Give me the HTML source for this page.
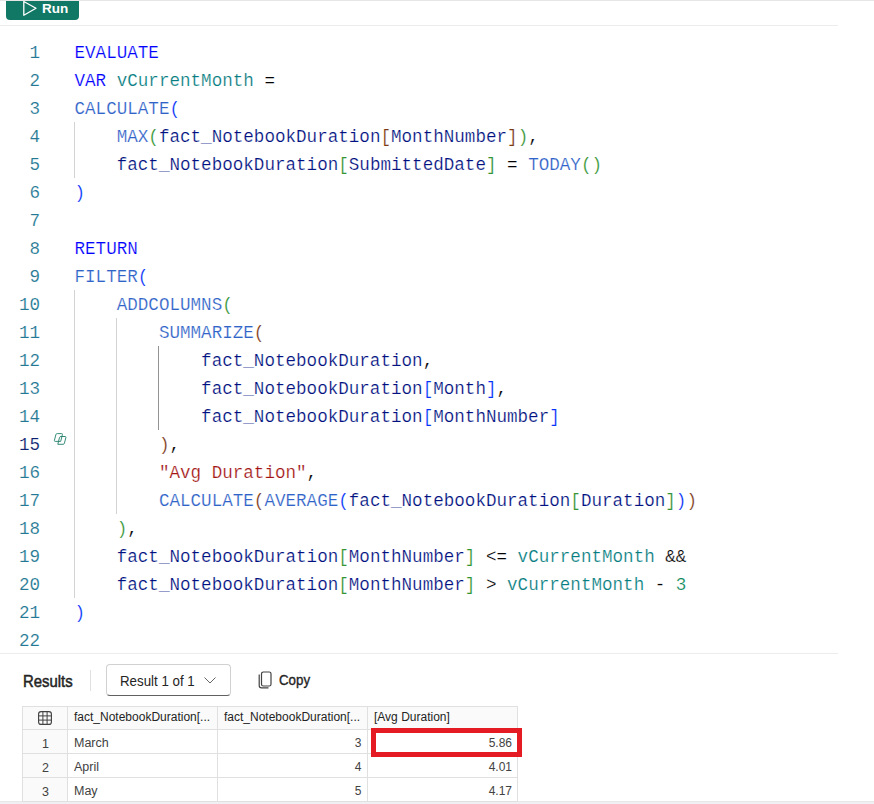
<!DOCTYPE html>
<html><head><meta charset="utf-8">
<style>
*{margin:0;padding:0;box-sizing:border-box}
html,body{width:874px;height:804px;overflow:hidden;background:#fff;position:relative}
body{font-family:"Liberation Sans",sans-serif}
.abs{position:absolute}
.hl{position:absolute;height:1px}
#run{position:absolute;left:6px;top:1px;width:73px;height:19px;background:#117865;border-radius:0 0 4px 4px}
#run .lbl{position:absolute;left:36px;top:0px;color:#fff;font-weight:bold;font-size:13.5px;line-height:16px}
.ln{position:absolute;left:0;width:40px;text-align:right;font-family:"Liberation Mono",monospace;font-size:17.58px;line-height:28px;height:28px;color:#237893;white-space:pre;-webkit-text-stroke:0.15px #fff}
.cl{position:absolute;left:74.5px;font-family:"Liberation Mono",monospace;font-size:17.58px;line-height:28px;height:28px;color:#000;white-space:pre;-webkit-text-stroke:0.2px #fff}
.ig{position:absolute;width:1px;background:#d3d3d3}
.k{color:#0000ff}.f{color:#2f63c8}.v{color:#067d80}.t{color:#001080}.s{color:#a31515}.n{color:#098658}
.b1{color:#0431fa}.b2{color:#319331}.b3{color:#7b3814}
</style></head><body>
<div class="hl" style="left:0;top:0;width:874px;background:#e6e6e6"></div>
<div id="run"><svg class="abs" style="left:16px;top:-1px" width="16" height="17" viewBox="0 0 16 17"><path d="M1.8 1.5 L14 8.3 L1.8 15.2 Z" fill="none" stroke="#fff" stroke-width="1.3" stroke-linejoin="round"/></svg><div class="lbl">Run</div></div>
<div class="hl" style="left:0;top:25px;width:838px;background:#ececec"></div>

<div id="code">
<svg class="abs" style="left:48px;top:428px" width="24" height="24" viewBox="48 428 24 24"><path d="M57.3 433.6 H61.6 Q62.6 433.6 62.4 434.6 L60.7 441.4 H55.2 Q54.2 441.4 54.4 440.4 L55.9 434.6 Q56.1 433.6 57.3 433.6 Z M61 436.5 H65.1 Q66.1 436.5 65.9 437.5 L64.4 443.3 Q64.2 444.3 63.2 444.3 H57.8 L59.5 437.5 Q59.7 436.5 61 436.5 Z" fill="none" stroke="#2a8571" stroke-width="0.95" stroke-linejoin="round"/></svg>
<div class="ln" style="top:39.3px">1</div>
<div class="cl" style="top:39.3px"><span class="k">EVALUATE</span></div>
<div class="ln" style="top:67.3px">2</div>
<div class="cl" style="top:67.3px"><span class="k">VAR</span> <span class="v">vCurrentMonth</span> =</div>
<div class="ln" style="top:95.3px">3</div>
<div class="cl" style="top:95.3px"><span class="f">CALCULATE</span><span class="b1">(</span></div>
<div class="ln" style="top:123.3px">4</div>
<div class="cl" style="top:123.3px">    <span class="f">MAX</span><span class="b2">(</span><span class="t">fact_NotebookDuration</span><span class="b3">[</span><span class="t">MonthNumber</span><span class="b3">]</span><span class="b2">)</span>,</div>
<div class="ln" style="top:151.3px">5</div>
<div class="cl" style="top:151.3px">    <span class="t">fact_NotebookDuration</span><span class="b2">[</span><span class="t">SubmittedDate</span><span class="b2">]</span> = <span class="f">TODAY</span><span class="b2">()</span></div>
<div class="ln" style="top:179.3px">6</div>
<div class="cl" style="top:179.3px"><span class="b1">)</span></div>
<div class="ln" style="top:207.3px">7</div>
<div class="cl" style="top:207.3px"></div>
<div class="ln" style="top:235.3px">8</div>
<div class="cl" style="top:235.3px"><span class="k">RETURN</span></div>
<div class="ln" style="top:263.3px">9</div>
<div class="cl" style="top:263.3px"><span class="f">FILTER</span><span class="b1">(</span></div>
<div class="ln" style="top:291.3px">10</div>
<div class="cl" style="top:291.3px">    <span class="f">ADDCOLUMNS</span><span class="b2">(</span></div>
<div class="ln" style="top:319.3px">11</div>
<div class="cl" style="top:319.3px">        <span class="f">SUMMARIZE</span><span class="b3">(</span></div>
<div class="ln" style="top:347.3px">12</div>
<div class="cl" style="top:347.3px">            <span class="t">fact_NotebookDuration</span>,</div>
<div class="ln" style="top:375.3px">13</div>
<div class="cl" style="top:375.3px">            <span class="t">fact_NotebookDuration</span><span class="b1">[</span><span class="t">Month</span><span class="b1">]</span>,</div>
<div class="ln" style="top:403.3px">14</div>
<div class="cl" style="top:403.3px">            <span class="t">fact_NotebookDuration</span><span class="b1">[</span><span class="t">MonthNumber</span><span class="b1">]</span></div>
<div class="ln" style="top:431.3px;color:#0b216f">15</div>
<div class="cl" style="top:431.3px">        <span class="b3">)</span>,</div>
<div class="ln" style="top:459.3px">16</div>
<div class="cl" style="top:459.3px">        <span class="s">"Avg Duration"</span>,</div>
<div class="ln" style="top:487.3px">17</div>
<div class="cl" style="top:487.3px">        <span class="f">CALCULATE</span><span class="b3">(</span><span class="f">AVERAGE</span><span class="b1">(</span><span class="t">fact_NotebookDuration</span><span class="b2">[</span><span class="t">Duration</span><span class="b2">]</span><span class="b1">)</span><span class="b3">)</span></div>
<div class="ln" style="top:515.3px">18</div>
<div class="cl" style="top:515.3px">    <span class="b2">)</span>,</div>
<div class="ln" style="top:543.3px">19</div>
<div class="cl" style="top:543.3px">    <span class="t">fact_NotebookDuration</span><span class="b2">[</span><span class="t">MonthNumber</span><span class="b2">]</span> &lt;= <span class="v">vCurrentMonth</span> &amp;&amp;</div>
<div class="ln" style="top:571.3px">20</div>
<div class="cl" style="top:571.3px">    <span class="t">fact_NotebookDuration</span><span class="b2">[</span><span class="t">MonthNumber</span><span class="b2">]</span> &gt; <span class="v">vCurrentMonth</span> - <span class="n">3</span></div>
<div class="ln" style="top:599.3px">21</div>
<div class="cl" style="top:599.3px"><span class="b1">)</span></div>
<div class="ln" style="top:627.3px">22</div>
<div class="cl" style="top:627.3px"></div>
<div class="ig" style="left:74px;top:122px;height:56px;background:#d3d3d3"></div>
<div class="ig" style="left:74px;top:290px;height:308px;background:#d3d3d3"></div>
<div class="ig" style="left:116px;top:318px;height:196px;background:#d3d3d3"></div>
<div class="ig" style="left:158px;top:346px;height:84px;background:#939393"></div>
</div><!--/code-->

<div class="hl" style="left:0;top:653px;width:838px;background:#ececec"></div>
<div id="results">
<div class="abs" style="left:22.5px;top:671.5px;font-size:16px;line-height:20px;color:#242424;-webkit-text-stroke:0.5px #242424;transform:scaleX(0.93);transform-origin:0 0">Results</div>
<div class="abs" style="left:90px;top:670px;width:1px;height:21px;background:#e0e0e0"></div>
<div class="abs" style="left:106px;top:664px;width:125px;height:32px;border:1px solid #d1d1d1;border-bottom-color:#616161;border-radius:4px;background:#fff"></div>
<div class="abs" style="left:119.5px;top:672px;font-size:14px;line-height:18px;color:#242424;transform:scaleX(0.95);transform-origin:0 0">Result 1 of 1</div>
<svg class="abs" style="left:203px;top:676px" width="14" height="9" viewBox="0 0 14 9"><path d="M1.5 1.5 L7 7 L12.5 1.5" fill="none" stroke="#666" stroke-width="1"/></svg>
<svg class="abs" style="left:258px;top:671px" width="14" height="18" viewBox="0 0 14 18"><rect x="3.5" y="1" width="9.5" height="14" rx="1.8" fill="none" stroke="#424242" stroke-width="1.2"/><path d="M1.2 3.5 V14.5 Q1.2 16.8 3.5 16.8 H10.5" fill="none" stroke="#424242" stroke-width="1.2"/></svg>
<div class="abs" style="left:278.5px;top:671px;font-size:14px;line-height:18px;color:#242424;-webkit-text-stroke:0.35px #242424;transform:scaleX(0.95);transform-origin:0 0">Copy</div>
</div>
<div id="table">
<div class="abs" style="left:0;top:801px;width:874px;height:1px;background:#e8e8e8"></div><div class="abs" style="left:0;top:802px;width:874px;height:2px;background:#f0f0f4"></div>
<div class="abs" style="left:22px;top:706px;width:496px;height:95px;background:#fff"></div>
<div class="abs" style="left:22px;top:706px;width:496px;height:23px;background:#fafafa"></div>
<div class="abs" style="left:22px;top:706px;width:45px;height:95px;background:#fafafa"></div>
<div class="abs" style="left:22px;top:706px;width:1px;height:95px;background:#e0e0e0"></div>
<div class="abs" style="left:67px;top:706px;width:1px;height:95px;background:#e0e0e0"></div>
<div class="abs" style="left:217px;top:706px;width:1px;height:95px;background:#e0e0e0"></div>
<div class="abs" style="left:367px;top:706px;width:1px;height:95px;background:#e0e0e0"></div>
<div class="abs" style="left:517px;top:706px;width:1px;height:95px;background:#e0e0e0"></div>
<div class="abs" style="left:22px;top:706px;width:496px;height:1px;background:#e0e0e0"></div>
<div class="abs" style="left:22px;top:729px;width:496px;height:1px;background:#e0e0e0"></div>
<div class="abs" style="left:22px;top:753px;width:496px;height:1px;background:#e0e0e0"></div>
<div class="abs" style="left:22px;top:777px;width:496px;height:1px;background:#e0e0e0"></div>
<div class="abs" style="left:22px;top:801px;width:496px;height:1px;background:#e0e0e0"></div>
<svg class="abs" style="left:37px;top:710px" width="16" height="16" viewBox="0 0 16 16"><rect x="1.6" y="1.6" width="12.8" height="12.8" rx="2.5" fill="none" stroke="#424242" stroke-width="1.15"/><path d="M5.9 1.6V14.4M10.1 1.6V14.4M1.6 5.9H14.4M1.6 10.1H14.4" stroke="#424242" stroke-width="1"/></svg>
<div style="position:absolute;font-size:12.5px;line-height:16px;color:#242424;white-space:nowrap;left:74px;top:708.5px;font-size:12px;color:#242424">fact_NotebookDuration[...</div>
<div style="position:absolute;font-size:12.5px;line-height:16px;color:#242424;white-space:nowrap;left:224px;top:708.5px;font-size:12px;color:#242424">fact_NotebookDuration[...</div>
<div style="position:absolute;font-size:12.5px;line-height:16px;color:#242424;white-space:nowrap;left:374px;top:708.5px;font-size:12px;color:#242424">[Avg Duration]</div>
<div style="position:absolute;font-size:12.5px;line-height:16px;color:#242424;white-space:nowrap;left:5px;width:40px;text-align:right;top:736.0px;width:45px;left:23px;text-align:center;color:#424242">1</div>
<div style="position:absolute;font-size:12.5px;line-height:16px;color:#242424;white-space:nowrap;left:74px;top:735.0px;color:#424242">March</div>
<div style="position:absolute;font-size:12.5px;line-height:16px;color:#242424;white-space:nowrap;left:241.5px;width:120px;text-align:right;font-size:12px;top:735.0px;color:#424242">3</div>
<div style="position:absolute;font-size:12.5px;line-height:16px;color:#242424;white-space:nowrap;left:392px;width:120px;text-align:right;font-size:12px;top:735.0px;color:#424242">5.86</div>
<div style="position:absolute;font-size:12.5px;line-height:16px;color:#242424;white-space:nowrap;left:5px;width:40px;text-align:right;top:760.0px;width:45px;left:23px;text-align:center;color:#424242">2</div>
<div style="position:absolute;font-size:12.5px;line-height:16px;color:#242424;white-space:nowrap;left:74px;top:759.0px;color:#424242">April</div>
<div style="position:absolute;font-size:12.5px;line-height:16px;color:#242424;white-space:nowrap;left:241.5px;width:120px;text-align:right;font-size:12px;top:759.0px;color:#424242">4</div>
<div style="position:absolute;font-size:12.5px;line-height:16px;color:#242424;white-space:nowrap;left:392px;width:120px;text-align:right;font-size:12px;top:759.0px;color:#424242">4.01</div>
<div style="position:absolute;font-size:12.5px;line-height:16px;color:#242424;white-space:nowrap;left:5px;width:40px;text-align:right;top:784.0px;width:45px;left:23px;text-align:center;color:#424242">3</div>
<div style="position:absolute;font-size:12.5px;line-height:16px;color:#242424;white-space:nowrap;left:74px;top:783.0px;color:#424242">May</div>
<div style="position:absolute;font-size:12.5px;line-height:16px;color:#242424;white-space:nowrap;left:241.5px;width:120px;text-align:right;font-size:12px;top:783.0px;color:#424242">5</div>
<div style="position:absolute;font-size:12.5px;line-height:16px;color:#242424;white-space:nowrap;left:392px;width:120px;text-align:right;font-size:12px;top:783.0px;color:#424242">4.17</div>
<div class="abs" style="left:371px;top:728px;width:151px;height:29px;border:5px solid #e51b23"></div>
</div>


</body></html>
